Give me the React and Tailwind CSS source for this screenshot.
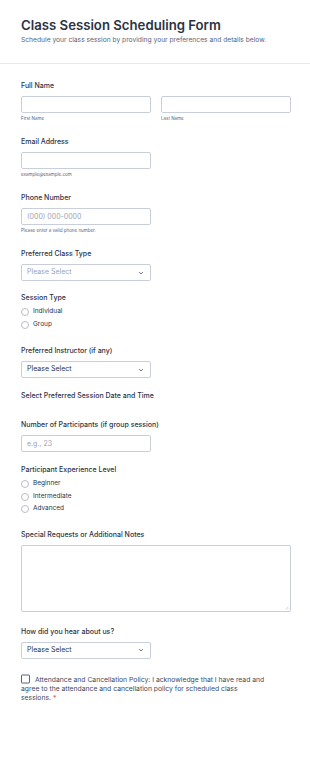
const font = { fontFamily: "Inter, 'Noto Sans', sans-serif" };

const Label = ({ children, className = "" }) => (
  <div className={`text-[7px] font-medium leading-[9px] text-[#2c3345] ${className}`}>{children}</div>
);

const Input = ({ placeholder = "", className = "w-[130px]" }) => (
  <div className={`h-[17px] rounded-[2px] border border-[#c9cfda] bg-white px-[5px] text-[7px] leading-[15px] text-[#9ca3b3] ${className}`}>
    {placeholder}
  </div>
);

const Sub = ({ children }) => <div className="mt-[3px] text-[4.5px] leading-[6px] text-[#57647e]">{children}</div>;

const Chevron = () => (
  <svg width="6" height="6" viewBox="0 0 10 10" fill="none" stroke="#57647e" strokeWidth="1.6">
    <path d="M2 3.5 L5 6.5 L8 3.5" />
  </svg>
);

const Select = ({ muted }) => (
  <div className="flex h-[17px] w-[130px] items-center justify-between rounded-[2px] border border-[#c9cfda] bg-white pl-[5px] pr-[6px]">
    <span className={`text-[7px] ${muted ? "text-[#9ca3b3]" : "text-[#2c3345]"}`}>Please Select</span>
    <Chevron />
  </div>
);

const Radio = ({ label }) => (
  <div className="flex h-[12.5px] items-center gap-[4px]">
    <span className="h-[8px] w-[8px] rounded-full border border-[#b8bdc9] bg-white" />
    <span className="text-[6.5px] text-[#2c3345]">{label}</span>
  </div>
);

export default function App() {
  return (
    <div className="min-h-[772px] w-[310px] bg-white" style={font}>
      <div className="px-[21px] pt-[17px] pb-[18px]">
        <h1 className="text-[13.2px] font-semibold leading-[17px] text-[#2c3345]">Class Session Scheduling Form</h1>
        <p className="mt-[2px] text-[6.7px] leading-[9px] text-[#57647e]">
          Schedule your class session by providing your preferences and details below.
        </p>
      </div>
      <div className="h-px bg-[#e6e8ee]" />
      <div className="px-[21px] pt-[17px]">
        <Label>Full Name</Label>
        <div className="mt-[6px] flex gap-[10px]">
          <div>
            <Input />
            <Sub>First Name</Sub>
          </div>
          <div>
            <Input />
            <Sub>Last Name</Sub>
          </div>
        </div>

        <Label className="mt-[15px]">Email Address</Label>
        <Input className="mt-[6px] w-[130px]" />
        <Sub>example@example.com</Sub>

        <Label className="mt-[15px]">Phone Number</Label>
        <Input className="mt-[6px] w-[130px]" placeholder="(000) 000-0000" />
        <Sub>Please enter a valid phone number.</Sub>

        <Label className="mt-[15px]">Preferred Class Type</Label>
        <div className="mt-[6px]">
          <Select muted />
        </div>

        <Label className="mt-[12px]">Session Type</Label>
        <div className="mt-[4px]">
          <Radio label="Individual" />
          <Radio label="Group" />
        </div>

        <Label className="mt-[15px]">Preferred Instructor (if any)</Label>
        <div className="mt-[6px]">
          <Select />
        </div>

        <Label className="mt-[13px]">Select Preferred Session Date and Time</Label>

        <Label className="mt-[20px]">Number of Participants (if group session)</Label>
        <Input className="mt-[6px] w-[130px]" placeholder="e.g., 23" />

        <Label className="mt-[13px]">Participant Experience Level</Label>
        <div className="mt-[4px]">
          <Radio label="Beginner" />
          <Radio label="Intermediate" />
          <Radio label="Advanced" />
        </div>

        <Label className="mt-[14px]">Special Requests or Additional Notes</Label>
        <div className="relative mt-[6px] h-[67px] w-[270px] rounded-[2px] border border-[#c9cfda] bg-white">
          <svg className="absolute right-[1px] bottom-[1px]" width="4" height="4" viewBox="0 0 4 4" stroke="#b8bdc9" strokeWidth="0.5">
            <path d="M0.5 3.5 L3.5 0.5 M2 3.5 L3.5 2" />
          </svg>
        </div>

        <Label className="mt-[15px]">How did you hear about us?</Label>
        <div className="mt-[6px]">
          <Select />
        </div>

        <div className="mt-[14px] flex w-[247px] items-start">
          <p className="text-[6.8px] leading-[9.3px] text-[#404a5c]">
            <span className="mr-[5px] inline-block h-[9px] w-[9px] translate-y-[1.5px] rounded-[1px] border border-[#57647e] bg-white align-baseline" />
            Attendance and Cancellation Policy: I acknowledge that I have read and agree to the attendance and cancellation policy for scheduled class sessions.
            <span className="ml-[2px] text-[#f23a3c]">*</span>
          </p>
        </div>
      </div>
    </div>
  );
}
